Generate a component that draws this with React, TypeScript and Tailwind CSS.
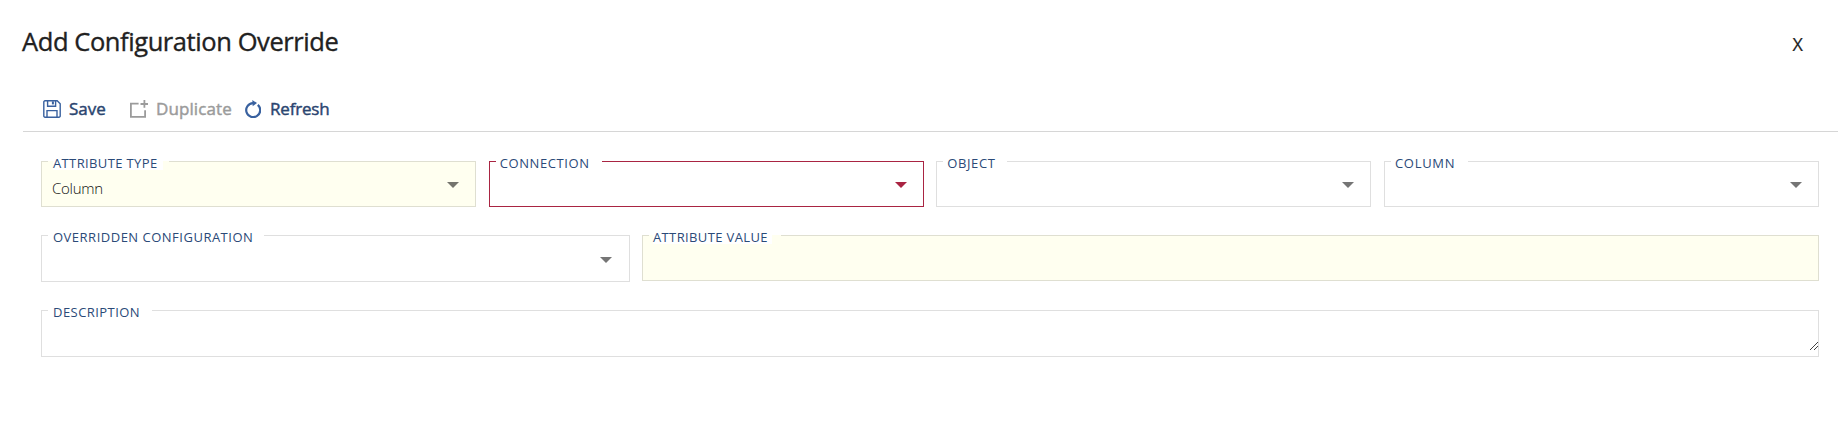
import type { ReactNode } from "react";

type FieldProps = {
  label: string;
  className: string;
  labelClass: string;
  notchClass: string;
  tone?: "plain" | "filled" | "error";
  arrow?: boolean;
  children?: ReactNode;
};

const tones = {
  plain: { box: "border-[#dfdfdf] bg-white", notch: "bg-white", arrow: "text-[#757575]" },
  filled: { box: "border-[#dfdfd1] bg-[#fffff0]", notch: "bg-[#fffff0]", arrow: "text-[#75756e]" },
  error: { box: "border-[#a92442] bg-white", notch: "bg-white", arrow: "text-[#a92442]" },
};

function Field({ label, className, labelClass, notchClass, tone = "plain", arrow, children }: FieldProps) {
  const t = tones[tone];
  return (
    <div className={`relative flex items-center justify-between border pl-2.5 ${t.box} ${className}`}>
      <span className={`absolute -top-px left-1.5 h-px ${t.notch} ${notchClass}`} />
      <label
        className={`absolute left-[11px] -top-[4px] h-3 whitespace-nowrap bg-white text-[13px] leading-[10px] text-[#2b4a78] ${labelClass}`}
      >
        {label}
      </label>
      <span className="mt-[7px] text-[15px] font-light leading-5 tracking-[-0.25px] text-[#111]">{children}</span>
      {arrow && (
        <svg className={`mt-0.5 h-1.5 w-3 ${t.arrow}`} viewBox="0 0 12 6" fill="currentColor">
          <path d="M0 0h12L6 6z" />
        </svg>
      )}
    </div>
  );
}

function SaveIcon() {
  return (
    <svg className="size-[18px]" viewBox="0 0 18 18" fill="none" stroke="#39619f" strokeWidth="1.4">
      <path d="M2 .8h12.2l3 3V16a1.2 1.2 0 0 1-1.2 1.2H2A1.2 1.2 0 0 1 .8 16V2A1.2 1.2 0 0 1 2 .8z" />
      <path d="M4.6 1v5.2h8V1M4 17v-6.4h10V17" />
      <path d="M9.9 1.4v3" strokeWidth="2" />
    </svg>
  );
}

function DuplicateIcon() {
  return (
    <svg className="size-[18px]" viewBox="0 0 18 18" fill="none" stroke="#9b9b9b" strokeWidth="1.8">
      <path d="M8.6 3.7H.9v13.2h14.2v-6.7" />
      <path d="M14.4 0v7.8M10.5 4h7.5" />
    </svg>
  );
}

function RefreshIcon() {
  return (
    <svg className="h-[18px] w-4" viewBox="0 0 16 18" fill="none" stroke="#39619f" strokeWidth="2.2">
      <path d="M12.8 4.8A7 7 0 1 1 8 3.1" />
      <path d="M7.3 0 12 3.1 7.7 6.2z" fill="#39619f" stroke="none" />
    </svg>
  );
}

export default function App() {
  return (
    <div className="h-[433px] bg-white pl-[23px] pr-[10px] font-['Open_Sans','Noto_Sans',sans-serif]">
      <header className="flex h-[86px] items-start justify-between pr-[35px]">
        <h1 className="-ml-px mt-[23px] text-[25.5px] leading-9 tracking-[-0.42px] text-[#212121] [-webkit-text-stroke:0.35px_#212121]">
          Add Configuration Override
        </h1>
        <button className="mt-[32px] text-[18px] leading-6 text-[#212121] [-webkit-text-stroke:0.2px_#212121]">X</button>
      </header>

      <div className="flex h-[46px] items-center border-b border-[#d6d6d6] pl-5 text-[17px] font-medium leading-6 text-[#2b4570] [-webkit-text-stroke:0.45px_currentColor]">
        <button className="flex w-[87px] items-center gap-2">
          <SaveIcon />
          <span>Save</span>
        </button>
        <button className="flex w-[115px] items-center gap-2 text-[#9b9b9b]">
          <DuplicateIcon />
          <span className="tracking-[0.1px]">Duplicate</span>
        </button>
        <button className="flex items-center gap-[9px]">
          <RefreshIcon />
          <span className="tracking-[-0.2px]">Refresh</span>
        </button>
      </div>

      <main className="w-[1796px] pl-[18px] pt-[29px]">
        <div className="flex justify-between">
          <Field label="ATTRIBUTE TYPE" tone="filled" arrow className="h-[46px] w-[435px] pr-4" labelClass="w-[110px] tracking-[0.37px]" notchClass="w-[121px]">
            Column
          </Field>
          <Field label="CONNECTION" tone="error" arrow className="h-[46px] w-[435px] pr-4" labelClass="-ml-px w-[96px] tracking-[0.6px]" notchClass="w-[106px]" />
          <Field label="OBJECT" arrow className="h-[46px] w-[435px] pr-4" labelClass="-ml-px w-[53px] tracking-[0.6px]" notchClass="w-[64px]" />
          <Field label="COLUMN" arrow className="h-[46px] w-[435px] pr-4" labelClass="-ml-px w-[66px] tracking-[0.7px]" notchClass="w-[77px]" />
        </div>
        <div className="mt-7 flex items-start gap-3">
          <Field label="OVERRIDDEN CONFIGURATION" arrow className="h-[47px] w-[589px] pr-[17px]" labelClass="w-[206px] tracking-[0.5px]" notchClass="w-[216px]" />
          <Field label="ATTRIBUTE VALUE" tone="filled" className="h-[46px] w-[1177px]" labelClass="-ml-px w-[119px] tracking-[0.37px]" notchClass="w-[132px]" />
        </div>
        <div className="relative mt-7">
          <Field label="DESCRIPTION" className="h-[47px] w-full" labelClass="w-[94px] tracking-[0.45px]" notchClass="w-[104px]" />
          <svg className="absolute bottom-[7px] right-px size-2" viewBox="0 0 8 8" stroke="#444" strokeWidth="1">
            <path d="M0 8 8 0M4 8l4-4" />
          </svg>
        </div>
      </main>
    </div>
  );
}
